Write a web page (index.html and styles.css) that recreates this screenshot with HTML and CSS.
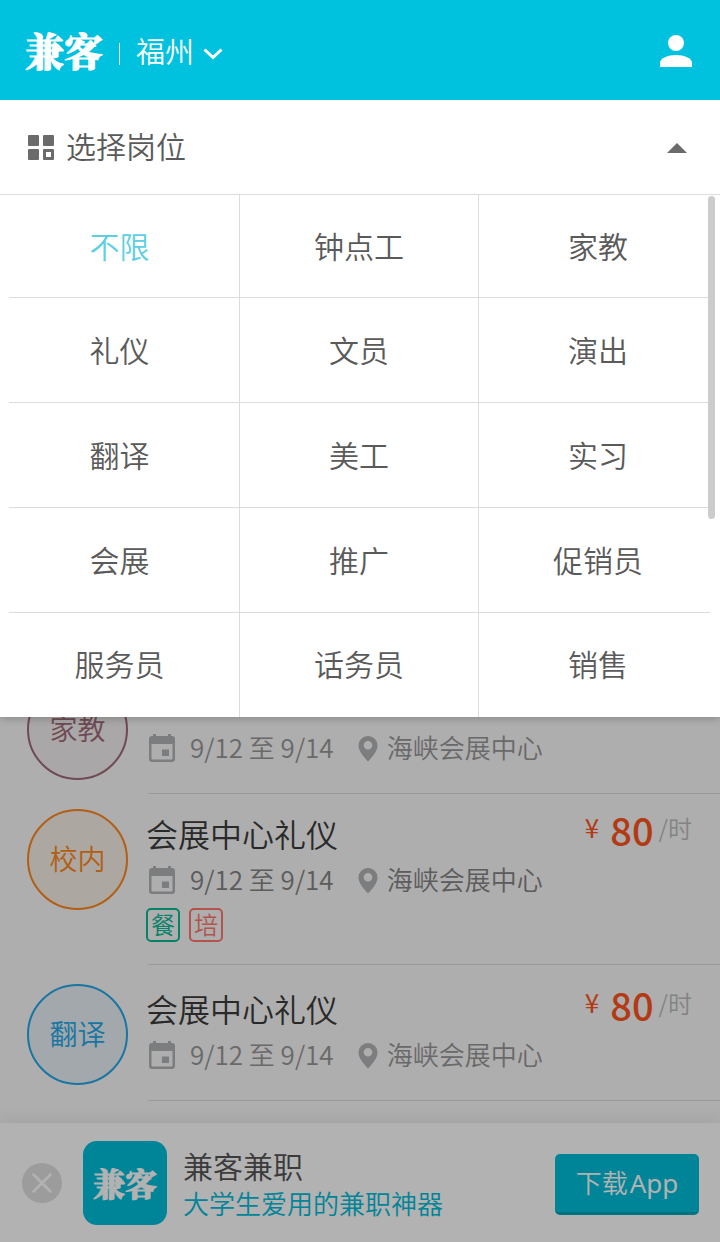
FILE: index.html
```html
<!DOCTYPE html>
<html lang="zh-CN">
<head>
<meta charset="utf-8">
<meta name="viewport" content="width=device-width, initial-scale=1">
<title>兼客</title>
<link rel="stylesheet" href="styles.css">
</head>
<body>
<svg class="sprite" aria-hidden="true">
  <symbol id="calendar" viewBox="0 0 26 28">
    <path fill-rule="evenodd" d="M4 0h3v2h12V0h3v2h1a3 3 0 0 1 3 3v20a3 3 0 0 1-3 3H3a3 3 0 0 1-3-3V5a3 3 0 0 1 3-3h1zM2.500 10v14.500a1 1 0 0 0 1 1h19a1 1 0 0 0 1-1V10z"/>
    <path d="M13 15.500h7v6.500h-7z"/>
  </symbol>
  <symbol id="pin" viewBox="0 0 20 26">
    <path fill-rule="evenodd" d="M10 0a9.500 9.500 0 0 0-9.500 9.500C.5 15 5 20 10 25.500c5-5.500 9.500-10.500 9.500-16A9.500 9.500 0 0 0 10 0zm0 5a4.300 4.300 0 1 1 0 8.600 4.300 4.300 0 0 1 0-8.600z"/>
  </symbol>
</svg>
<div class="page">
  <header class="topbar">
    <h1 class="brand">兼客</h1>
    <button class="city" type="button"><span>福州</span>
      <svg width="20" height="12" viewBox="0 0 20 12" aria-hidden="true"><path d="M1.500 1.500 10 9.500l8.500-8" fill="none" stroke="#fff" stroke-width="3"/></svg>
    </button>
    <button class="user" type="button" aria-label="我的">
      <svg width="32" height="32" viewBox="0 0 32 32" aria-hidden="true"><circle cx="16" cy="8" r="8" fill="#fff"/><path d="M0 32v-4c0-5 8-8 16-8s16 3 16 8v4z" fill="#fff"/></svg>
    </button>
  </header>

  <section class="filter">
    <button class="filter-toggle" type="button" aria-expanded="true">
      <svg width="26" height="25" viewBox="0 0 26 25" aria-hidden="true"><g fill="#6b6b6b"><rect width="11" height="11" rx="1"/><rect x="15" width="11" height="11" rx="1"/><rect y="14" width="11" height="11" rx="1"/><path fill-rule="evenodd" d="M16 14h9a1 1 0 0 1 1 1v9a1 1 0 0 1-1 1h-9a1 1 0 0 1-1-1v-9a1 1 0 0 1 1-1zm2 3v5h5v-5z"/></g></svg>
      <span>选择岗位</span>
      <svg class="caret" width="20" height="10" viewBox="0 0 20 10" aria-hidden="true"><path d="M0 10 10 0l10 10z" fill="#6b6b6b"/></svg>
    </button>
    <div class="options">
      <div class="option-row"><button type="button" class="selected">不限</button><button type="button">钟点工</button><button type="button">家教</button></div>
      <div class="option-row"><button type="button">礼仪</button><button type="button">文员</button><button type="button">演出</button></div>
      <div class="option-row"><button type="button">翻译</button><button type="button">美工</button><button type="button">实习</button></div>
      <div class="option-row"><button type="button">会展</button><button type="button">推广</button><button type="button">促销员</button></div>
      <div class="option-row"><button type="button">服务员</button><button type="button">话务员</button><button type="button">销售</button></div>
      <div class="scroll-thumb"></div>
    </div>
  </section>

  <main class="jobs">
    <article class="job covered">
      <span class="badge tutor">家教</span>
      <div class="job-body">
        <p class="meta"><svg class="ico-cal"><use href="#calendar"/></svg><span class="date">9/12 至 9/14</span><svg class="ico-pin"><use href="#pin"/></svg><span>海峡会展中心</span></p>
      </div>
    </article>
    <article class="job tagged">
      <span class="badge campus">校内</span>
      <div class="job-body">
        <div class="headline"><h2>会展中心礼仪</h2><p class="price"><span class="yen">¥</span><strong>80</strong><span class="unit">/时</span></p></div>
        <p class="meta strong"><svg class="ico-cal"><use href="#calendar"/></svg><span class="date">9/12 至 9/14</span><svg class="ico-pin"><use href="#pin"/></svg><span>海峡会展中心</span></p>
        <p class="tags"><span class="tag meal">餐</span><span class="tag train">培</span></p>
      </div>
    </article>
    <article class="job">
      <span class="badge translate">翻译</span>
      <div class="job-body">
        <div class="headline"><h2>会展中心礼仪</h2><p class="price"><span class="yen">¥</span><strong>80</strong><span class="unit">/时</span></p></div>
        <p class="meta"><svg class="ico-cal"><use href="#calendar"/></svg><span class="date">9/12 至 9/14</span><svg class="ico-pin"><use href="#pin"/></svg><span>海峡会展中心</span></p>
      </div>
    </article>
  </main>

  <footer class="app-banner">
    <button class="close" type="button" aria-label="关闭">
      <svg width="20" height="20" viewBox="0 0 20 20" aria-hidden="true"><path d="M1.500 1.500l17 17M18.500 1.500l-17 17" stroke="#fff" stroke-width="2.500" stroke-linecap="round"/></svg>
    </button>
    <span class="app-icon">兼客</span>
    <div class="app-text"><p class="app-name">兼客兼职</p><p class="app-slogan">大学生爱用的兼职神器</p></div>
    <a class="download" href="#">下载<span class="latin">App</span></a>
  </footer>
  <div class="dim"></div>
</div>
</body>
</html>
```
FILE: styles.css
```css
* { box-sizing: border-box; margin: 0; padding: 0; }

body {
  font-family: "Noto Sans CJK SC", sans-serif;
  font-weight: 350;
  color: #3c3c3c;
  background: #f9f9f9;
}

button {
  font: inherit;
  color: inherit;
  background: none;
  border: 0;
  cursor: pointer;
}

svg { flex: none; display: block; }
.sprite { position: absolute; width: 0; height: 0; }

.page {
  position: relative;
  display: flex;
  flex-direction: column;
  min-height: 100vh;
}

/* Header */
.topbar {
  position: relative;
  z-index: 3;
  display: flex;
  align-items: center;
  height: 100px;
  padding: 0 28px 0 25px;
  background: #00c1de;
  color: #fff;
}
.brand {
  padding-bottom: 2px;
  font-family: "Noto Serif CJK SC", "Noto Sans CJK SC", serif;
  font-size: 39px;
  line-height: 48px;
  font-weight: 900;
  -webkit-text-stroke: 1px #fff;
}
.city {
  display: flex;
  align-items: center;
  gap: 9px;
  height: 22px;
  margin: 8px 0 0 16px;
  padding-left: 16px;
  border-left: 1px solid #fff;
  font-size: 29px;
  line-height: 30px;
}
.city span { padding-bottom: 8px; }
.city svg { margin-bottom: 1px; }
.user { margin: 2px 0 0 auto; }

/* Category picker */
.filter {
  position: relative;
  z-index: 2;
  background: #fff;
  color: #5a5a5a;
  font-size: 30px;
  box-shadow: 0 2px 8px rgba(0, 0, 0, 0.2);
}
.filter-toggle {
  display: flex;
  align-items: center;
  width: 100%;
  height: 95px;
  padding: 1px 33px 0 28px;
  border-bottom: 1px solid #dcdcdc;
}
.filter-toggle span { margin-left: 12px; padding-bottom: 5px; }
.caret { margin-left: auto; }

.options { position: relative; }
.option-row {
  position: relative;
  display: grid;
  grid-template-columns: repeat(3, 1fr);
  height: 105px;
  padding-right: 3px;
}
.option-row:first-child { height: 103px; }
.option-row:nth-child(5) { height: 104px; }
.option-row::after {
  content: "";
  position: absolute;
  left: 9px;
  right: 10px;
  bottom: 0;
  border-bottom: 1px solid #dcdcdc;
}
.option-row:nth-child(5)::after { display: none; }
.option-row button { padding-bottom: 4px; }
.option-row button + button { border-left: 1px solid #dcdcdc; }
.option-row .selected { color: #5ccfe3; }
.scroll-thumb {
  position: absolute;
  top: 1px;
  right: 5px;
  width: 7px;
  height: 323px;
  border-radius: 4px;
  background: #ccc;
}

/* Job list */
.jobs { margin-top: -59px; }
.job {
  display: flex;
  gap: 18px;
  min-height: 136px;
  padding: 19px 0 0 27px;
}
.job.covered { padding-top: 21px; }
.job.tagged { min-height: 171px; padding-top: 15px; }
.badge {
  flex: none;
  width: 101px;
  height: 101px;
  border: 2px solid;
  border-radius: 50%;
  font-size: 28px;
  line-height: 95px;
  text-align: center;
}
.tutor { color: #9f6a78; background: #f2f0f1; }
.campus { color: #ff8820; background: #f7efe5; }
.translate { color: #25a9e8; background: #e8f1f6; }

.job-body {
  position: relative;
  flex: 1;
}
.job-body::after {
  content: "";
  position: absolute;
  left: 2px;
  right: 0;
  bottom: 0;
  border-bottom: 1px solid #dbdbdb;
}
.covered .job-body { padding-top: 50px; }
.headline {
  display: flex;
  justify-content: space-between;
  height: 52px;
  padding-right: 28px;
}
.headline h2 {
  font-size: 32px;
  line-height: 48px;
  font-weight: 350;
}
.price {
  display: flex;
  line-height: 44px;
  color: #ff531d;
}
.yen { font-size: 26px; line-height: 36px; font-weight: 400; }
.price strong { margin-left: 11px; font-size: 38px; line-height: 42px; font-weight: 500; }
.unit { margin-left: 5px; font-size: 24px; line-height: 38px; color: #bcbcbc; }
.meta {
  display: flex;
  align-items: center;
  height: 38px;
  padding-left: 3px;
  font-size: 26px;
  color: #979797;
  fill: #b1b3b7;
}
.meta span { padding-bottom: 4px; }
.meta.strong { color: #848484; }
.ico-cal { width: 26px; height: 28px; }
.ico-pin { width: 20px; height: 26px; margin: 2px 9px 0 24px; }
.date { margin-left: 15px; }
.tags { display: flex; gap: 9px; margin-top: 9px; }
.tag {
  width: 34px;
  height: 34px;
  border: 2px solid;
  border-radius: 5px;
  font-size: 24px;
  line-height: 28px;
  text-align: center;
}
.meal { color: #0aba95; }
.train { color: #ff786d; }

/* App banner */
.app-banner {
  display: flex;
  align-items: center;
  height: 119px;
  margin-top: auto;
  padding: 0 21px 0 22px;
  background: #fff;
  box-shadow: 0 -2px 16px rgba(0, 0, 0, 0.08);
}
.close {
  display: grid;
  place-items: center;
  width: 40px;
  height: 40px;
  border-radius: 50%;
  background: #e0e0e0;
}
.app-icon {
  width: 84px;
  height: 84px;
  margin-left: 21px;
  border-radius: 14px;
  background: #00bdda;
  color: #fff;
  font-family: "Noto Serif CJK SC", "Noto Sans CJK SC", serif;
  font-size: 32px;
  font-weight: 900;
  line-height: 82px;
  text-align: center;
  -webkit-text-stroke: 1px #fff;
}
.app-text { margin: 2px 0 0 16px; }
.app-name { font-size: 30px; line-height: 38px; color: #555; }
.app-slogan { font-size: 26px; line-height: 38px; color: #00bdda; }
.download {
  display: flex;
  justify-content: center;
  width: 144px;
  height: 61px;
  margin: 4px 0 0 auto;
  border-bottom: 3px solid #00a5b8;
  border-radius: 5px;
  background: #00bdda;
  color: #fff;
  font-size: 26px;
  line-height: 55px;
  text-decoration: none;
}
.latin { margin-left: 2px; font-family: "Noto Sans", sans-serif; font-weight: 400; line-height: 59px; }

.dim {
  position: absolute;
  inset: 0;
  z-index: 1;
  background: rgba(0, 0, 0, 0.3);
}
```
